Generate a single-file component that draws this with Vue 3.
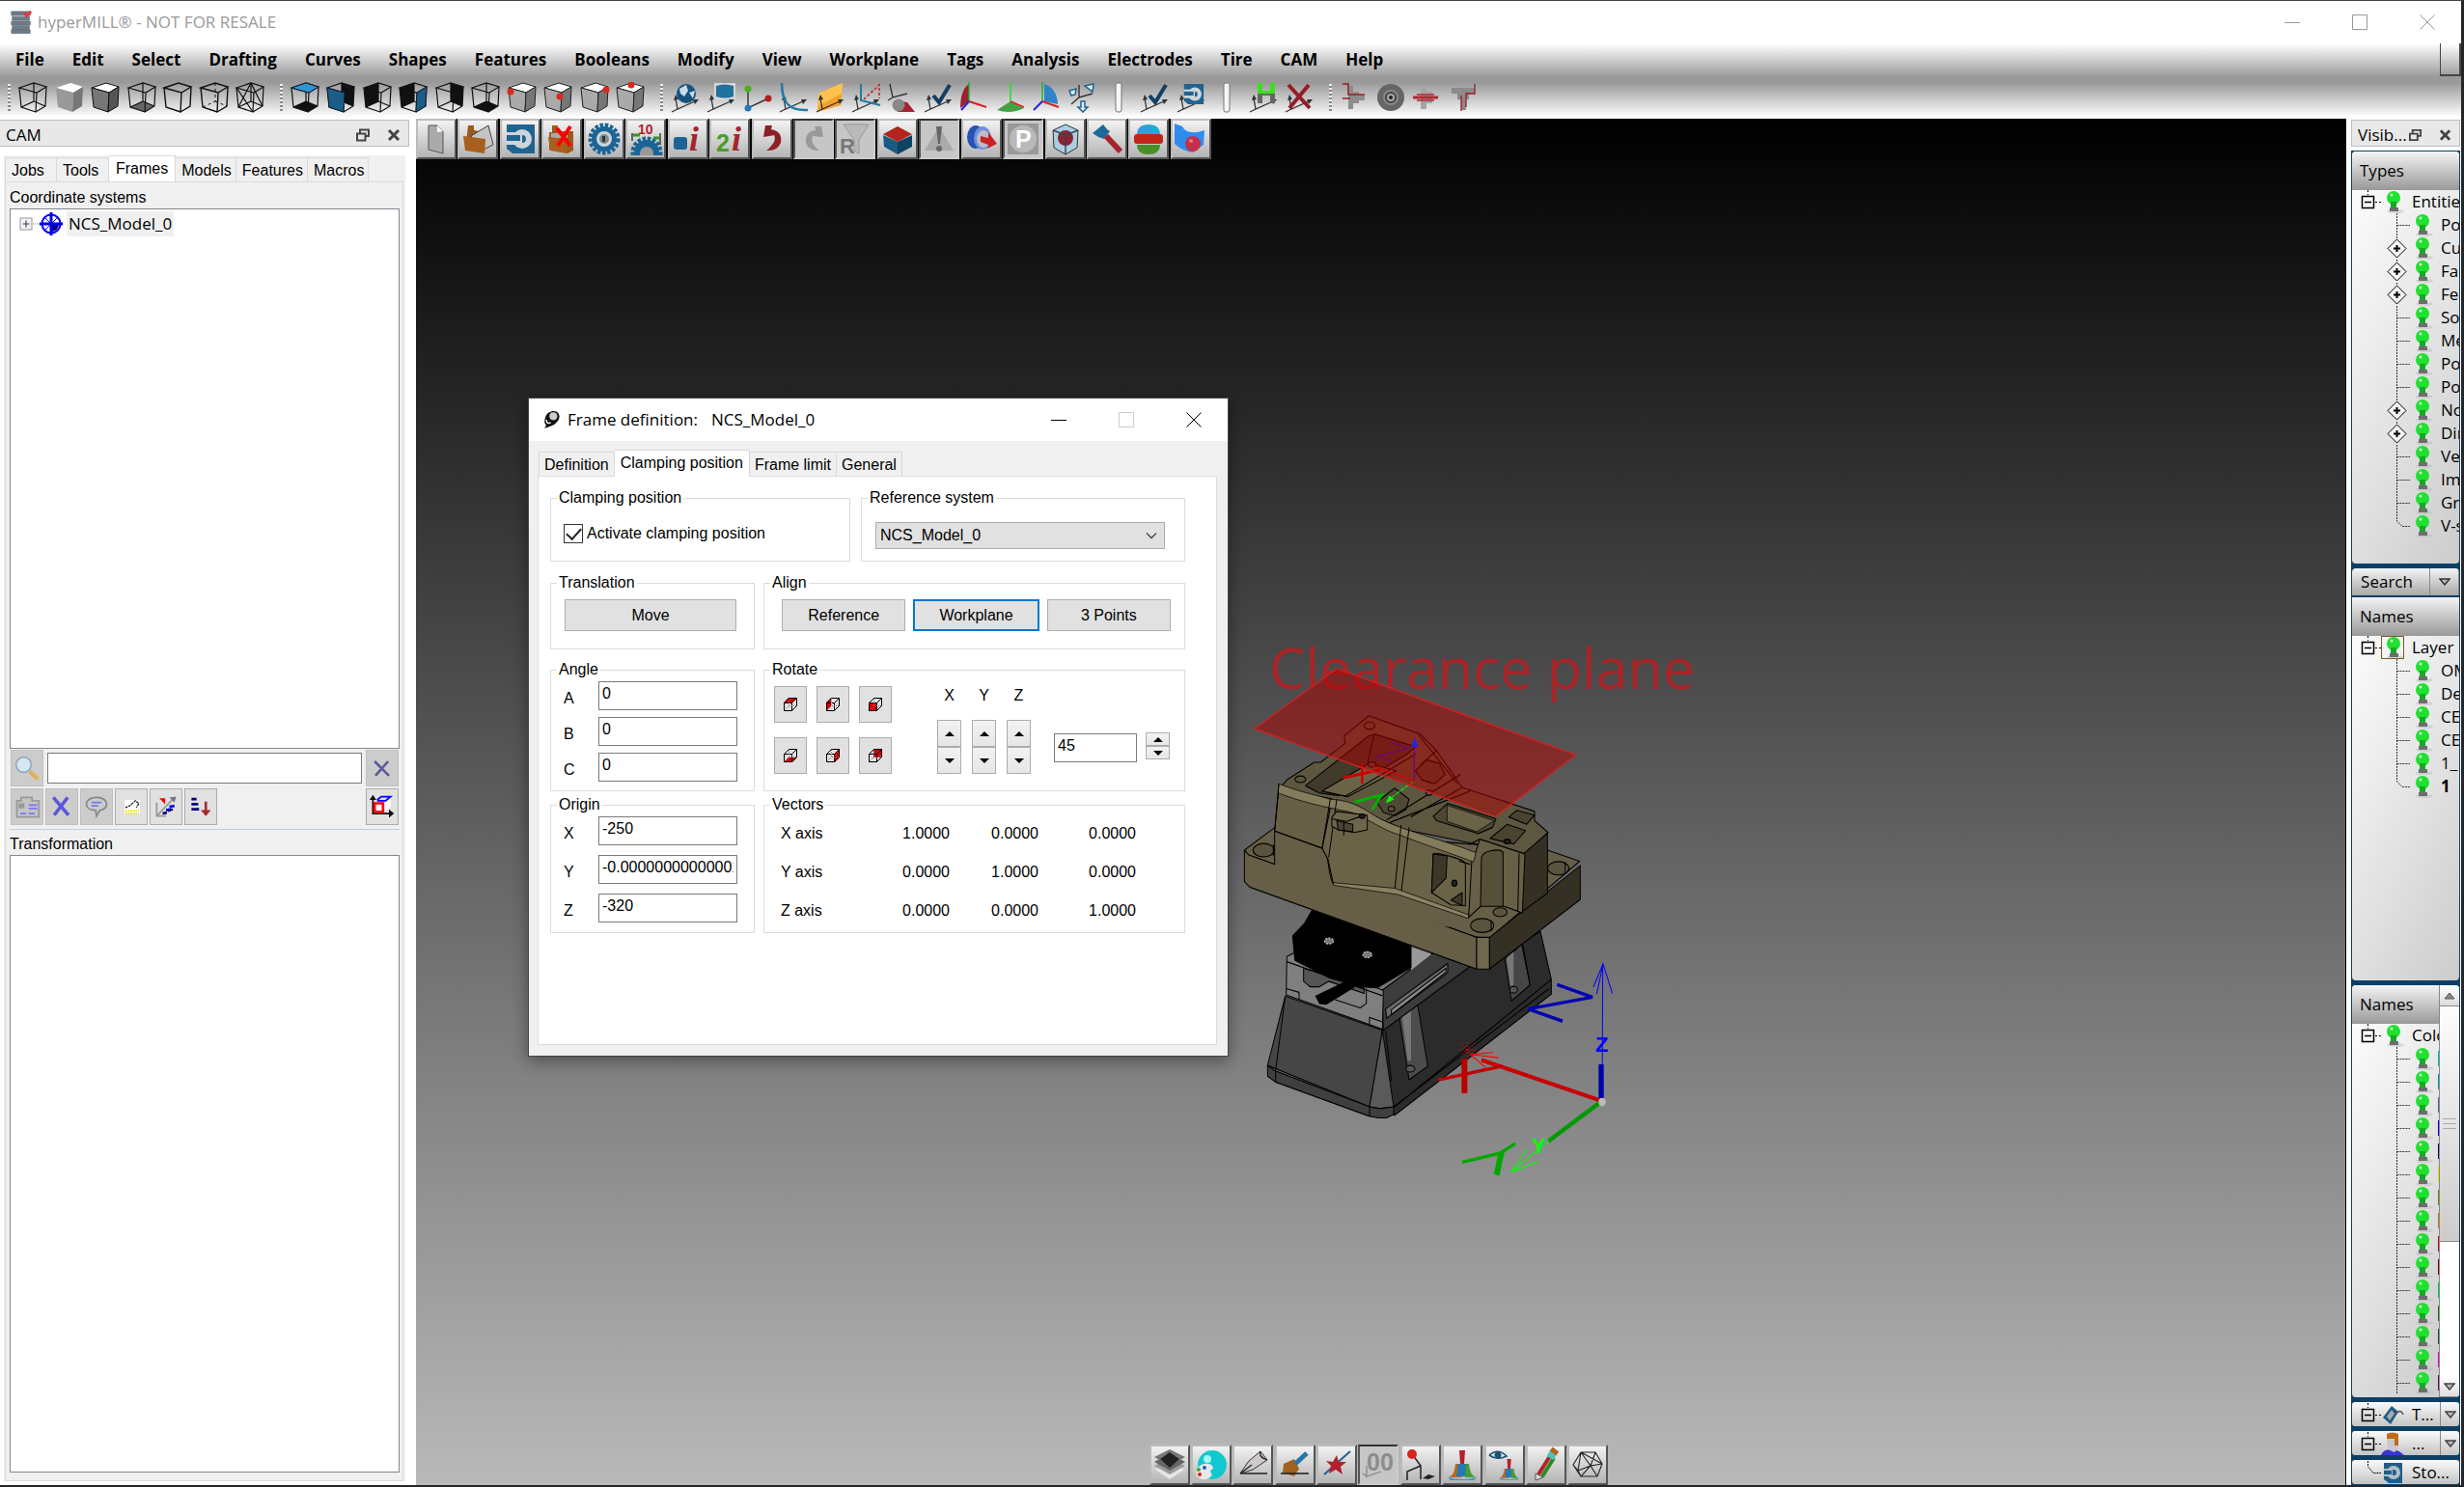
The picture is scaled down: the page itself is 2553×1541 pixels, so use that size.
<template>
  <div class="app">
    <header class="title-bar">
      <svg class="logo" viewBox="0 0 26 26">
        <g fill="#6f7d88" stroke="#4b565f" stroke-width="0.6">
          <rect x="2" y="1" width="21" height="4.5" /><rect x="3" y="7" width="19" height="4" />
          <rect x="2" y="12" width="21" height="4" /><rect x="3" y="17" width="19" height="4" />
          <rect x="2" y="21.5" width="21" height="4" />
        </g>
        <path d="M16 2l3 4 5-5" stroke="#e0393b" stroke-width="3" fill="none" />
      </svg>
      <h1>hyperMILL® - NOT FOR RESALE</h1>
      <div class="window-buttons">
        <button aria-label="Minimize"><svg viewBox="0 0 16 16"><path d="M0 8.5H16" /></svg></button>
        <button aria-label="Maximize"><svg viewBox="0 0 16 16"><path d="M.5 .5H15.5V15.5H.5Z" /></svg></button>
        <button aria-label="Close"><svg viewBox="0 0 16 16"><path d="M.5 .5 15.5 15.5M15.5 .5 .5 15.5" /></svg></button>
      </div>
    </header>

    <div class="ribbon">
      <nav class="menu">
        <button v-for="item in menuItems" :key="item">{{ item }}</button>
        <span class="menu-corner"></span>
      </nav>
      <div class="toolbar">
        <template v-for="(group, g) in toolbarGroups" :key="g">
          <span class="gripper"></span>
          <div class="tool-group" :style="{ width: group.width + 'px' }">
            <button v-for="(name, i) in group.icons" :key="i" :aria-label="name">
              <svg viewBox="0 0 32 32" v-html="icons[name]"></svg>
            </button>
          </div>
        </template>
      </div>
    </div>

    <main class="body">
      <aside class="cam-panel">
        <div class="dock-title">
          <span>CAM</span>
          <button aria-label="Float"><svg viewBox="0 0 14 14"><path d="M4 5V1.5H13V8H9.5M1 5.5H9.5V12.5H1Z" /></svg></button>
          <button aria-label="Close"><svg viewBox="0 0 14 14"><path class="thick" d="M2 2 12 12M12 2 2 12" /></svg></button>
        </div>
        <div class="cam-body">
          <div class="tabs">
            <button v-for="tab in camTabs" :key="tab" :class="{ active: tab === activeCamTab }" @click="activeCamTab = tab">{{ tab }}</button>
          </div>
          <div class="cam-pane">
            <p class="caption">Coordinate systems</p>
            <div class="tree-box">
              <div class="frame-row">
                <svg class="expander" viewBox="0 0 21 14">
                  <rect x="1" y="1" width="12" height="12" fill="#f3f3f3" stroke="#989898" />
                  <path d="M3.5 7H10.5M7 3.5V10.5" stroke="#31457a" stroke-width="1.2" />
                  <path d="M14 7H21" stroke="#888" stroke-dasharray="1 1" />
                </svg>
                <svg class="origin" viewBox="0 0 24 24">
                  <circle cx="12" cy="12" r="9.5" fill="#fff" stroke="#00e" stroke-width="2" />
                  <path d="M5 5 19 19M19 5 5 19" stroke="#00e" />
                  <path d="M12 12H20A8 8 0 0 1 12 20Z" fill="#00007c" />
                  <path d="M0 12H24M12 0V24" stroke="#00e" stroke-width="3" />
                </svg>
                <span class="frame-name">NCS_Model_0</span>
              </div>
            </div>
            <div class="search-row">
              <button class="pad-btn off" aria-label="Search"><svg viewBox="0 0 32 32" v-html="icons.lens"></svg></button>
              <input aria-label="Filter coordinate systems" type="text" />
              <button class="pad-btn off" aria-label="Clear"><svg viewBox="0 0 32 32" v-html="icons.clear"></svg></button>
            </div>
            <div class="action-row">
              <button v-for="a in frameActions" :key="a.icon" class="pad-btn" :class="{ off: a.off }" :aria-label="a.icon">
                <svg viewBox="0 0 32 32" v-html="icons[a.icon]"></svg>
              </button>
            </div>
            <div class="splitter"></div>
            <p class="caption">Transformation</p>
            <div class="transform-box"></div>
          </div>
        </div>
      </aside>

      <section class="viewport">
        <div class="view-bar">
          <button v-for="name in viewIcons" :key="name" :class="{ off: offIcons.includes(name) }" :aria-label="name">
            <svg viewBox="0 0 36 36" v-html="icons[name]"></svg>
          </button>
        </div>

        <span class="clearance">Clearance plane</span>
        <svg class="model" viewBox="0 0 1560 1568" preserveAspectRatio="none">
          <g stroke="#000" stroke-width="3" stroke-linejoin="round">
            <!-- pedestal -->
            <path fill="#2b2b2b" d="M487 1118 740 940 920 880 978 850 1012 980V1020L525 1348 480 1330Z" />
            <path fill="#464646" d="M185 1025 487 1118 447 1325 130 1213Z" />
            <path fill="#5a5a5a" d="M487 1118 522 1325 480 1330 447 1325Z" />
            <path fill="#3f3f3f" d="M130 1213 155 1228 447 1325 480 1330 522 1325V1345L500 1355H475L445 1350 155 1258 130 1242Z" />
            <path fill="none" d="M155 1228V1258M155 1228 185 1025M447 1325V1350M522 1325 1005 1005M525 1325 1012 980" />
            <path fill="#4c4c4c" d="M540 1085 596 1045 628 1215 570 1252Z" />
            <path fill="#777" d="M548 1080 576 1062V1198L566 1202Z" stroke="none" />
            <ellipse cx="574" cy="1222" rx="14" ry="9" fill="#555" />
            <path fill="#464646" d="M868 925 920 885 946 995 888 1038Z" />
            <path fill="#777" d="M872 922 895 905V995L885 998Z" stroke="none" />
            <ellipse cx="895" cy="1008" rx="12" ry="9" fill="#555" />
            <path fill="none" d="M497 1120 515 1255M923 885 946 995" />
            <!-- vise -->
            <path fill="#3c3c3c" d="M485 1010 645 908 760 945 490 1118Z" />
            <path fill="#6a6a6a" d="M497 1060 690 937V962L500 1085Z" />
            <path fill="#8a8a8a" d="M515 1062 685 950V960L515 1075Z" />
            <path fill="#999" stroke="none" d="M576 893 640 912 576 955Z" />
            <path fill="#7f7f7f" d="M190 918 212 908 490 1010 487 1115 188 1022Z" />
            <path fill="#555" d="M242 950 300 965 430 1003V1018L320 985 290 1000 262 1000 242 985Z" />
            <path fill="none" d="M190 932 487 1024M188 1005 228 1015V1035M447 1100V1083L487 1095M340 1035 418 1057 437 1045V1005" />
            <path d="M268 793 576 888V948L470 1003 425 1000 320 975 215 928 208 862 245 828Z" fill="#000" />
            <path d="M375 985 280 1025 292 1045 312 1047 400 1000Z" fill="#000" />
            <g fill="#777" stroke="#ccc" stroke-width="3" stroke-dasharray="6 4"><ellipse cx="321" cy="876" rx="14" ry="8" /><ellipse cx="440" cy="913" rx="14" ry="8" /></g>
            <!-- clamped part -->
            <path fill="#665e46" d="M58 630 150 570 1000 630 1100 660 820 868 775 865 70 643Z" />
            <path fill="#665e46" d="M58 630 72 643 780 866V952L75 730 58 715Z" />
            <path fill="#6f684f" d="M780 866H820V952H780Z" />
            <path fill="#353024" d="M820 866 1102 672V764L820 952Z" />
            <path fill="#665e46" stroke="none" d="M154 560 320 620 330 720 700 838 660 834 154 674Z" />
            <path fill="#675f46" d="M165 465 325 490 325 518 300 625 152 578Z" />
            <path fill="#665e46" stroke="none" d="M154 580 300 626C325 640 315 700 335 722L400 742V752L154 674Z" />
            <path fill="none" d="M152 578 300 625C325 640 315 700 335 722" />
            <path fill="#6b6348" d="M325 515 400 520 560 580 775 655 755 812 535 745 335 722 318 655 300 625Z" />
            <path fill="#5d5740" d="M165 465 190 440 275 392 295 392 372 340 368 320 445 266 605 316 655 360 735 460 960 525V550L1002 582 930 640 560 575 325 490Z" />
            <path fill="#353024" d="M928 638 1000 584V747L915 800Z" />
            <path fill="#675f46" d="M775 640 790 600 930 640 922 800 860 780 795 780 755 812 765 655Z" />
            <path fill="#565039" d="M795 650C800 630 850 625 862 635V782H792Z" />
            <path fill="#857c5c" stroke-width="2" d="M165 450C220 470 280 480 325 492 400 495 430 520 480 545 560 580 690 605 778 637L770 662C690 635 600 610 545 590 480 575 430 535 380 525 310 515 220 495 163 475Z" />
            <path fill="none" d="M165 450 152 578V668M325 492 300 622M345 492 320 650M545 562 525 742M570 568 545 748M912 638 908 795" />
            <path fill="#8a8262" stroke-width="2" d="M335 718 525 733 755 805V815L535 750 335 725Z" />
            <path fill="#3f3a2a" d="M248 455 445 320 465 316 590 350 560 372 350 482 290 475Z" />
            <path fill="#6b6348" d="M300 470 445 395 530 415 380 485Z" />
            <path fill="#6e664b" d="M330 540 345 525 440 535V575L400 582 350 575 330 565Z" />
            <path fill="#4a4431" d="M345 550 395 560V580L350 575Z" />
            <path fill="none" d="M330 545 375 552 415 540M367 552V590" />
            <ellipse cx="424" cy="538" rx="9" ry="6" fill="#222" />
            <path fill="#4f4935" d="M470 500 525 462 570 492 560 520 525 537 490 528Z" />
            <path fill="#4c4632" d="M645 538 690 503 840 545 830 568 785 585 655 550Z" />
            <path fill="#6b6348" d="M688 508V552L780 580 835 550Z" stroke-width="2" />
            <path fill="#494330" d="M880 540 905 522 960 535 935 560ZM822 598 875 560 932 577 895 613Z" />
            <path fill="#6b6348" d="M645 640C650 632 740 655 745 665V780L700 778 640 745Z" />
            <path fill="#3c3728" d="M645 640 688 645 685 705 640 745Z" />
            <path fill="#3c3728" d="M700 765 735 745V780Z" />
            <ellipse cx="711" cy="719" rx="8" ry="8" fill="#222" /><ellipse cx="875" cy="606" rx="10" ry="6" fill="#222" />
            <path fill="none" d="M500 548 730 425M510 555 760 470M370 485 590 370M600 318 720 450M655 360 605 400M575 540 735 460M755 615 790 600M725 660 760 668M460 320 440 398" />
            <g fill="#5a543f">
              <ellipse cx="118" cy="630" rx="33" ry="18" /><ellipse cx="1034" cy="679" rx="33" ry="18" />
              <ellipse cx="797" cy="834" rx="36" ry="19" /><ellipse cx="853" cy="798" rx="22" ry="12" />
              <ellipse cx="232" cy="438" rx="17" ry="9" /><ellipse cx="447" cy="293" rx="17" ry="10" />
              <ellipse cx="455" cy="398" rx="12" ry="7" /><ellipse cx="515" cy="518" rx="10" ry="7" />
              <ellipse cx="635" cy="438" rx="13" ry="9" /><ellipse cx="632" cy="474" rx="10" ry="7" />
            </g>
            <path fill="#4c4632" d="M590 415 625 385 665 395 682 425 650 450 610 440Z" />
            <path fill="none" d="M825 820V850M1055 662V692M148 615V645" />
          </g>
          <!-- local axes -->
          <path d="M586 442 500 497" stroke="#0f0" stroke-width="3" fill="none" stroke-dasharray="14 4" />
          <path d="M400 500 485 480 455 520" stroke="#00b000" stroke-width="8" fill="none" />
          <path d="M498 503 508 482 524 492Z" fill="#0f0" />
          <path d="M365 434 480 412M424 395V450" stroke="#d00000" stroke-width="8" fill="none" />
          <path d="M586 442 460 403" stroke="#f00" stroke-width="4" fill="none" />
          <path d="M586 442V340M512 337 570 355 465 376 520 390" stroke="#2a12d8" stroke-width="4" fill="none" />
          <path d="M345 138 1087 372 838 539 90 301Z" fill="#b00000" fill-opacity="0.5" stroke="#cc2222" stroke-width="4" />
          <path d="M587 324 577 350H598Z" fill="#22f" />
          <!-- world axes -->
          <g fill="none">
            <path d="M1170 1310 1172 935M1143 1000 1173 938 1202 1018M1153 1020 1173 938" stroke="#00f" stroke-width="3" />
            <path d="M1030 994 1140 1028 940 1060 1047 1093" stroke="#0000b4" stroke-width="9" />
            <path d="M1167 1210V1305" stroke="#0000a8" stroke-width="16" />
            <path d="M1165 1308 795 1198" stroke="#c80000" stroke-width="11" />
            <path d="M660 1252 860 1215" stroke="#c00000" stroke-width="9" />
            <path d="M742 1195V1288" stroke="#b80000" stroke-width="18" />
            <path d="M760 1183 848 1192M760 1183 812 1222M760 1183 830 1178M760 1183 790 1205" stroke="#f00" stroke-width="3" />
            <path d="M728 1150 775 1195M730 1190 775 1152M752 1150V1198M728 1170H776" stroke="#f00" stroke-width="3" stroke-dasharray="3 6" />
            <path d="M1165 1312 1003 1418" stroke="#009a00" stroke-width="12" />
            <path d="M1003 1418 885 1502M885 1502 938 1438M885 1502 970 1473M885 1502 925 1490" stroke="#0f0" stroke-width="3" />
            <path d="M735 1475 855 1450 900 1424" stroke="#00a800" stroke-width="9" />
            <path d="M857 1448 842 1510" stroke="#00a800" stroke-width="18" />
          </g>
          <circle cx="1170" cy="1312" r="11" fill="#bbb" />
        </svg>
        <span class="axis axis-z">Z</span>
        <span class="axis axis-y">Y</span>

        <div class="dialog" role="dialog" aria-label="Frame definition">
          <div class="dialog-title">
            <svg class="dialog-icon" viewBox="0 0 20 22">
              <path d="M3 8C5 1 15-1 18 4S16 16 10 18L2 21 4 17C1 15 2 11 3 8Z" fill="#111" />
              <circle cx="12" cy="7" r="4.5" fill="#ccc" /><path d="M4 11C4 15 7 16 9 14" stroke="#fff" stroke-width="1.5" fill="none" />
            </svg>
            <h2>Frame definition:<span>NCS_Model_0</span></h2>
            <div class="dialog-buttons">
              <button aria-label="Minimize"><svg viewBox="0 0 16 16"><path d="M0 8.5H16" stroke="#000" /></svg></button>
              <button aria-label="Maximize" disabled><svg viewBox="0 0 16 16"><path d="M.5 .5H15.5V15.5H.5Z" stroke="#ccc" /></svg></button>
              <button aria-label="Close"><svg viewBox="0 0 16 16"><path d="M.5 .5 15.5 15.5M15.5 .5 .5 15.5" stroke="#000" /></svg></button>
            </div>
          </div>
          <div class="dialog-body">
            <div class="tabs">
              <button v-for="tab in dialogTabs" :key="tab" :class="{ active: tab === activeTab }" @click="activeTab = tab">{{ tab }}</button>
            </div>
            <div class="dialog-pane">
              <div class="row clamp-row">
                <fieldset class="clamp">
                  <legend>Clamping position</legend>
                  <label class="check"><input v-model="activated" type="checkbox" />Activate clamping position</label>
                </fieldset>
                <fieldset class="fill">
                  <legend>Reference system</legend>
                  <div class="select-wrap">
                    <select v-model="reference" aria-label="Reference system"><option>NCS_Model_0</option></select>
                    <svg viewBox="0 0 12 8"><path d="M1 1.5 6 6.5 11 1.5" fill="none" stroke="#444" stroke-width="1.3" /></svg>
                  </div>
                </fieldset>
              </div>
              <div class="row move-row">
                <fieldset class="side"><legend>Translation</legend><button class="push wide">Move</button></fieldset>
                <fieldset class="fill">
                  <legend>Align</legend>
                  <div class="align-buttons">
                    <button class="push">Reference</button>
                    <button class="push focused">Workplane</button>
                    <button class="push">3 Points</button>
                  </div>
                </fieldset>
              </div>
              <div class="row angle-row">
                <fieldset class="side">
                  <legend>Angle</legend>
                  <div class="fields">
                    <label v-for="f in angles" :key="f.axis"><span>{{ f.axis }}</span><input v-model="f.value" type="text" /></label>
                  </div>
                </fieldset>
                <fieldset class="fill">
                  <legend>Rotate</legend>
                  <div class="rotate">
                    <div class="faces">
                      <button v-for="face in faces" :key="face" class="face" aria-label="Rotate to face">
                        <svg viewBox="0 0 16 16">
                          <path :d="face" fill="#d80000" />
                          <path d="M1.5 6.5H9.5V14.5H1.5ZM1.5 6.5 6.5 1.5H14.5L9.5 6.5M14.5 1.5V9.5L9.5 14.5" fill="none" stroke="#000" />
                          <path d="M6.5 2V9.5H14M6 10 2 14" fill="none" stroke="#777" stroke-dasharray="1 1" />
                        </svg>
                      </button>
                    </div>
                    <div class="axes">
                      <div v-for="axis in ['X', 'Y', 'Z']" :key="axis" class="axis-spin">
                        <span>{{ axis }}</span>
                        <button :aria-label="axis + ' up'"><i class="up"></i></button>
                        <button :aria-label="axis + ' down'"><i class="down"></i></button>
                      </div>
                    </div>
                    <input v-model="step" class="step" type="text" aria-label="Rotation step" />
                    <div class="step-spin">
                      <button aria-label="Increase"><i class="up"></i></button>
                      <button aria-label="Decrease"><i class="down"></i></button>
                    </div>
                  </div>
                </fieldset>
              </div>
              <div class="row origin-row">
                <fieldset class="side">
                  <legend>Origin</legend>
                  <div class="fields spaced">
                    <label v-for="f in origin" :key="f.axis"><span>{{ f.axis }}</span><input v-model="f.value" type="text" /></label>
                  </div>
                </fieldset>
                <fieldset class="fill">
                  <legend>Vectors</legend>
                  <table>
                    <colgroup><col class="col-name" /><col class="col-x" /><col class="col-y" /><col /></colgroup>
                    <tbody>
                      <tr v-for="v in vectors" :key="v.name">
                        <th scope="row">{{ v.name }}</th>
                        <td v-for="(n, i) in v.values" :key="i">{{ n }}</td>
                      </tr>
                    </tbody>
                  </table>
                </fieldset>
              </div>
            </div>
          </div>
        </div>

        <div class="bottom-bar">
          <button v-for="name in bottomIcons" :key="name" :class="{ off: name === 'decimals' }" :aria-label="name">
            <svg viewBox="0 0 36 36" v-html="icons[name]"></svg>
          </button>
        </div>
      </section>

      <aside class="dock">
        <div class="dock-title">
          <span>Visib...</span>
          <button aria-label="Float"><svg viewBox="0 0 14 14"><path d="M4 5V1.5H13V8H9.5M1 5.5H9.5V12.5H1Z" /></svg></button>
          <button aria-label="Close"><svg viewBox="0 0 14 14"><path class="thick" d="M2 2 12 12M12 2 2 12" /></svg></button>
        </div>
        <div class="dock-stack">
          <section v-for="panel in panels" :key="panel.root" class="panel">
            <div v-if="panel.search" class="search-head">
              <button>Search</button>
              <button aria-label="Search options"><svg viewBox="0 0 12 8"><path d="M1 1H11L6 7Z" fill="#bbb" stroke="#333" stroke-width="1.5" /></svg></button>
            </div>
            <div class="panel-main">
              <div class="panel-tree">
                <h3>{{ panel.title }}</h3>
                <div class="node">
                  <svg class="guide-root" viewBox="0 0 30 24"><path d="M10.5 6.5H22.5V18.5H10.5ZM13 12.5H20" fill="none" stroke="#000" stroke-width="1.5" /><path d="M16.5 0V5M24 12.5H30" stroke="#000" stroke-dasharray="2 2" /></svg>
                  <svg class="bulb" :class="{ current: panel.search }" viewBox="-1 0 24 24" v-html="icons.bulb"></svg>
                  <span>{{ panel.root }}</span>
                </div>
                <div v-for="(n, i) in panel.nodes" :key="i" class="node">
                  <svg class="guide" viewBox="0 0 60 24" v-html="guide(n, i === panel.nodes.length - 1 && !panel.scroll)"></svg>
                  <svg class="bulb" viewBox="-1 0 24 24" v-html="icons.bulb"></svg>
                  <i v-if="n.color" class="swatch" :style="{ background: n.color }"></i>
                  <span v-else :class="{ bold: n.bold }">{{ n.name }}</span>
                </div>
              </div>
              <div v-if="panel.scroll" class="scrollbar">
                <button aria-label="Scroll up"><svg viewBox="0 0 12 8"><path d="M1 7H11L6 1Z" fill="#888" stroke="#555" /></svg></button>
                <div class="thumb"><i></i><i></i><i></i></div>
                <div class="track"></div>
                <button aria-label="Scroll down"><svg viewBox="0 0 12 8"><path d="M1 1H11L6 7Z" fill="#bbb" stroke="#444" stroke-width="1.5" /></svg></button>
              </div>
            </div>
          </section>
          <section v-for="b in bars" :key="b.label" class="mini">
            <svg class="guide-root" viewBox="0 0 30 24">
              <path v-if="b.more" d="M10.5 6.5H22.5V18.5H10.5ZM13 12.5H20" fill="none" stroke="#000" stroke-width="1.5" />
              <path v-if="b.more" d="M16.5 0V5M24 12.5H30" stroke="#000" stroke-dasharray="2 2" />
              <path v-else d="M16.5 0V6L22 12.5H30" fill="none" stroke="#000" stroke-dasharray="2 1" />
            </svg>
            <svg class="mini-icon" viewBox="0 0 24 24" v-html="icons[b.icon]"></svg>
            <span>{{ b.label }}</span>
            <button v-if="b.more" aria-label="More"><svg viewBox="0 0 12 8"><path d="M1 1H11L6 7Z" fill="#bbb" stroke="#444" stroke-width="1.5" /></svg></button>
          </section>
        </div>
      </aside>
    </main>
  </div>
</template>

<script setup>
import { ref, reactive } from 'vue'

const menuItems = ['File', 'Edit', 'Select', 'Drafting', 'Curves', 'Shapes', 'Features', 'Booleans', 'Modify', 'View',
  'Workplane', 'Tags', 'Analysis', 'Electrodes', 'Tire', 'CAM', 'Help']

const toolbarGroups = [
  { width: 257, icons: ['wire', 'solid', 'solidEdges', 'glass', 'hidden', 'dashed', 'facets'] },
  { width: 369, icons: ['top', 'front', 'left', 'right', 'back', 'bottom', 'isoLeft', 'isoFront', 'isoRight', 'isoBack'] },
  { width: 668, icons: ['wpWorld', 'wpScreen', 'wpPoints', 'wpCurve', 'wpFace', 'wpPlane', 'wpCone', 'wpCheck', 'axX', 'axY',
    'axZ', 'wpArrows', 'bar', 'wpCheck', 'wpSave', 'bar', 'wpH', 'wpDelete'] },
  { width: 145, icons: ['tireA', 'tireB', 'tireC', 'tireD'] }
]

const viewIcons = ['file', 'open', 'disk', 'closeFile', 'gear', 'gearTen', 'info', 'infoTwo', 'undo', 'redo', 'filter', 'box',
  'warn', 'extrude', 'park', 'boundBox', 'hammer', 'zones', 'sheet']
const offIcons = ['redo', 'filter', 'warn', 'park']
const bottomIcons = ['layers', 'palette', 'pen', 'brush', 'star', 'decimals', 'probe', 'bell', 'bellEye', 'pencil', 'mesh']

const camTabs = ['Jobs', 'Tools', 'Frames', 'Models', 'Features', 'Macros']
const activeCamTab = ref('Frames')
const frameActions = [
  { icon: 'card', off: true }, { icon: 'remove', off: true }, { icon: 'note', off: true },
  { icon: 'edit' }, { icon: 'axes' }, { icon: 'sort' }, { icon: 'frame' }
]

const dialogTabs = ['Definition', 'Clamping position', 'Frame limit', 'General']
const activeTab = ref('Clamping position')
const activated = ref(true)
const reference = ref('NCS_Model_0')
const step = ref('45')
const angles = reactive([{ axis: 'A', value: '0' }, { axis: 'B', value: '0' }, { axis: 'C', value: '0' }])
const origin = reactive([{ axis: 'X', value: '-250' }, { axis: 'Y', value: '-0.00000000000001' }, { axis: 'Z', value: '-320' }])
const vectors = [
  { name: 'X axis', values: ['1.0000', '0.0000', '0.0000'] },
  { name: 'Y axis', values: ['0.0000', '1.0000', '0.0000'] },
  { name: 'Z axis', values: ['0.0000', '0.0000', '1.0000'] }
]

// highlighted side of the little cube on each rotate button
const faces = ['M1 6 6 1H15L10 6Z', 'M1 6 6 1V10L1 15Z', 'M1 6H10V15H1Z', 'M1 15 6 10H15L10 15Z', 'M10 6 15 1V10L10 15Z', 'M6 1H15V10H6Z']

const colors = ['#00b8c8', '#009c9c', '#4a6a8c', '#0000c8', '#000070', '#e8e000', '#807c10', '#c87820', '#d80000', '#780000',
  '#00d030', '#007c20', '#005a38', '#d800d8', '#70007c']

const panels = [
  {
    title: 'Types', root: 'Entities',
    nodes: [{ name: 'Points' }, { name: 'Curves', plus: true }, { name: 'Faces', plus: true }, { name: 'Features', plus: true },
      { name: 'Solids' }, { name: 'Meshes' }, { name: 'Polygons' }, { name: 'Point clouds' }, { name: 'Notes', plus: true },
      { name: 'Dimensions', plus: true }, { name: 'Vectors' }, { name: 'Images' }, { name: 'Groups' }, { name: 'V-sketches' }]
  },
  {
    title: 'Names', root: 'Layer', search: true,
    nodes: [{ name: 'OM' }, { name: 'Default' }, { name: 'CE' }, { name: 'CE' }, { name: '1_1' }, { name: '1', bold: true }]
  },
  { title: 'Names', root: 'Colors', scroll: true, nodes: colors.map(color => ({ color })) }
]

const bars = [
  { label: 'T...', icon: 'tag', more: true },
  { label: '...', icon: 'user', more: true },
  { label: 'Sto...', icon: 'store', more: false }
]

const guide = (node, last) => {
  if (node.plus) {
    return '<path d="M46.5 0V24" stroke="#333" stroke-dasharray="2 2"/><path d="M46.5 3 56 12.5 46.5 22 37 12.5Z" fill="#f4f4f4" stroke="#000"/><path d="M43 12.5H50M46.5 9V16" stroke="#000" stroke-width="2"/>'
  }
  const d = last ? 'M46.5 0V7L52 12.5H60' : 'M46.5 0V24M46.5 12.5H60'
  return `<path d="${d}" fill="none" stroke="#333" stroke-dasharray="2 1"/>`
}

const shape = (d, fill, stroke = 'none', w = 1) => `<path d="${d}" fill="${fill}" stroke="${stroke}" stroke-width="${w}"/>`
const line = (d, stroke, w = 1.4) => shape(d, 'none', stroke, w)
const ball = (x, y, r, fill) => `<circle cx="${x}" cy="${y}" r="${r}" fill="${fill}"/>`

const outer = 'M2 6 17 1 30 5 20 11ZM2 6 4 26 19 31 20 11M19 31 29 25 30 5'
const inner = 'M17 1V20L4 26M17 20 29 25'
const wire = line(outer + inner, '#111', 1.2)
const solid = (topFill, leftFill, rightFill, edge = 'none') =>
  shape('M2 6 17 1 30 5 20 11Z', topFill, edge) + shape('M2 6 20 11 19 31 4 26Z', leftFill, edge) + shape('M20 11 30 5 29 25 19 31Z', rightFill, edge)
const iso = (x, y) => solid('#fff', '#aaa', '#777', '#222') + ball(x, y, 3.5, '#d82a1c')
const smallAxes = line('M6 17 8 28 26 20M8 28 2 31', '#333', 1.3) + shape('M4 19 6 13 9 18ZM24 18 30 18 26 23Z', '#333')
const check = line('M11 14 17 21 28 3', '#123f63', 4)
const disk = () => shape('M4 3H33V33H10L4 28Z', '#1f6390') + ball(20, 18, 10, '#cdd5da') + ball(20, 18, 4, '#1f6390') + shape('M4 11H20V24H4Z', '#cdd5da') + shape('M4 14H18V20H4Z', '#1f6390')
const bell = shape('M15 3H21L20 17H16Z', '#b3212c') + shape('M11 17H18V31H4Q10 29 11 17Z', '#b86820') + shape('M14 17H22V30H12Z', '#2379b5') + shape('M22 17H25Q26 29 32 31H21Z', '#499b31') + shape('M3 31Q18 35 33 31L30 34H6Z', '#23a0cf')
const teeth = (x, y, r, c) => `<circle cx="${x}" cy="${y}" r="${r}" fill="none" stroke="${c}" stroke-width="5" stroke-dasharray="3.4 1.7"/><circle cx="${x}" cy="${y}" r="${r - 1}" fill="${c}"/>`
const clipped = content => `<svg width="36" height="35" overflow="hidden">${content}</svg>`
const letter = (x, y, size, fill, t, extra = '') => `<text x="${x}" y="${y}" font-size="${size}" fill="${fill}" ${extra}>${t}</text>`
const serif = 'font-family="Liberation Serif" font-style="italic" font-weight="bold"'
const sans = 'font-family="Liberation Sans" font-weight="bold"'

const icons = {
  wire,
  solid: solid('#fff', '#999', '#777'),
  solidEdges: solid('#fff', '#777', '#555', '#111'),
  glass: shape('M4 26 17 20 29 25 19 31Z', '#666') + wire,
  hidden: line(outer, '#111'),
  dashed: line(outer, '#111') + `<path d="${inner}" fill="none" stroke="#111" stroke-dasharray="3 3"/>`,
  facets: wire + line('M2 6 19 31M17 1 4 26M17 1 29 25', '#111', 1.2),
  top: shape('M4 26 17 20 29 25 19 31Z', '#111') + wire + shape('M2 6 17 1 30 5 20 11Z', '#2f94d4', '#123'),
  front: shape('M17 1 30 5 29 25 17 20Z', '#111') + wire + shape('M2 6 20 11 19 31 4 26Z', '#1d5c86', '#123'),
  left: shape('M2 6 17 1V20L4 26Z', '#111') + wire,
  right: shape('M2 6 17 1V20L4 26Z', '#111') + wire + shape('M20 11 30 5 29 25 19 31Z', '#1d5c86', '#123'),
  back: shape('M17 1 30 5 29 25 17 20Z', '#111') + wire,
  bottom: shape('M4 26 17 20 29 25 19 31Z', '#111') + wire,
  isoLeft: iso(4, 10),
  isoFront: iso(18, 15),
  isoRight: iso(28, 8),
  isoBack: iso(17, 3),
  wpWorld: smallAxes + ball(17, 12, 10, '#17527f') + shape('M10 7 17 3 19 9 15 15 11 12ZM20 11 26 9 24 17Z', '#c9dde9'),
  wpScreen: shape('M9 1H31V19H9Z', '#d6d6d6') + shape('M11 4Q20 1 29 4V15Q20 18 11 15Z', '#22729f') + smallAxes,
  wpPoints: line('M6 6V27L27 17', '#333') + ball(6, 7, 3.5, '#4caf1f') + ball(27, 17, 3.5, '#b31f1f') + ball(6, 27, 3.5, '#2379b5'),
  wpCurve: smallAxes + line('M4 1C4 22 12 30 31 29', '#2379a5', 2.5),
  wpFace: shape('M3 31 4 12 29 1 27 24Z', '#f5a32c') + shape('M4 12 29 1 28 12 3 25Z', '#ffc24d') + smallAxes,
  wpPlane: smallAxes + line('M11 2V19L31 24', '#2379a5', 2) + '<path d="M14 18 30 3V17" fill="none" stroke="#b22" stroke-width="1.5" stroke-dasharray="3 2"/>',
  wpCone: line('M4 2 7 16 22 12M7 16 2 19', '#333') + shape('M10 19 22 21 30 31H12Z', '#a52330') + ball(13, 24, 6.5, '#888'),
  wpCheck: smallAxes + check,
  axX: shape('M11 2V20L2 27Q2 8 11 2Z', '#9b2230') + line('M11 0V20', '#19b51f') + line('M11 20 29 26', '#d22', 2) + line('M11 20 3 29', '#22d', 2),
  axY: shape('M16 20 2 29Q16 34 30 27Z', '#45a045') + line('M16 0V20', '#19e51f', 1.5) + line('M16 20 30 26', '#d22', 1.5),
  axZ: shape('M14 2V20L28 23Q27 6 14 2Z', '#2f83c9') + line('M12 0V20', '#19b51f') + line('M12 20 29 26', '#d22', 2) + line('M12 20 3 29', '#22d', 2),
  wpArrows: line('M13 16V3M13 16 27 12M13 16 5 23', '#333') + shape('M3 9 10 7 9 13 5 14ZM19 4 28 2 27 10ZM15 20H19V26H22L17 31 12 26H15Z', '#dcecf5', '#1f6390', 1.5),
  bar: '<rect x="13" y="1" width="6" height="30" rx="2" fill="#f6f6f6" stroke="#777"/>',
  wpSave: smallAxes + '<g transform="translate(6 0) scale(.7)">' + disk() + '</g>',
  wpH: smallAxes + shape('M10 1H15V9H23V1H28V22H23V14H15V22H10Z', '#666') + shape('M10 1H15V9H23V1H28V12H10Z', '#3be01c'),
  wpDelete: smallAxes + line('M5 3 27 27M26 3 6 27', '#951c24', 4),
  tireA: shape('M10 4H15V28H10ZM15 10H21V22H15ZM21 13H27V19H21Z', '#8d8d8d') + line('M4 2H10V13H27M4 17H12', '#9b1c24', 1.5),
  tireB: ball(16, 16, 14, '#666') + ball(16, 16, 8, '#888') + ball(16, 16, 6, '#444') + ball(16, 16, 4, '#aaa') + ball(16, 16, 2, '#222'),
  tireC: shape('M10 4H16V28H10ZM16 10H22V22H16Z', '#a4a4a4') + line('M2 16H28', '#b32630', 3) + line('M6 13H24M6 19H24', '#b32630'),
  tireD: shape('M4 6H28V12H4ZM10 12H22V18H10ZM14 18H19V29H14Z', '#8b8b8b') + line('M28 2V12H19V26M14 14V30', '#9b1c24', 1.3),
  file: shape('M10 4H19L25 10V33L10 29Z', '#aaa', '#555') + shape('M19 4V11L25 10Z', '#fff'),
  open: shape('M8 4H14V9L20 10V22H6Z', '#9a5a1c') + shape('M11 15 29 4 34 24 22 30Z', '#c4c4c4', '#444') + shape('M3 15 26 18 25 33 5 30Z', '#a85f1c'),
  disk: disk(),
  closeFile: shape('M8 4H14V10H30V30L24 33 5 29V11H8Z', '#9a5a1c') + shape('M7 12H24V17H7Z', '#aaa') + shape('M4 16 24 18 23 33 6 30Z', '#a85f1c') + line('M13 7 27 25M27 5 14 25', '#f00', 4),
  gear: teeth(18, 18, 14, '#1c6496') + ball(18, 18, 8, '#cdd5da') + ball(18, 18, 5, '#7c8a92') + shape('M16 15H19V21H16Z', '#333'),
  gearTen: clipped(teeth(19, 32, 14, '#1c6496') + ball(19, 33, 7, '#999')) + letter(10, 13, 14, '#b3212c', '10', sans) + line('M4 12V20M33 12V24', '#333') + line('M5 14H12M26 17H32', '#2c9a22', 3),
  info: '<rect x="3" y="16" width="14" height="13" rx="3" fill="#1c6496"/>' + letter(19, 30, 36, '#a5252e', 'i', serif),
  infoTwo: letter(4, 31, 25, '#4c9a2a', '2', sans) + letter(20, 30, 36, '#a5252e', 'i', serif),
  undo: shape('M11 4 9 16 21 14 18 11Q24 17 18 24 15 28 12 30 23 31 27 22 29 10 17 8L18 4Z', '#8e1f27'),
  redo: shape('M26 5 28 16 17 15 19 12Q14 17 18 24 21 28 24 30 13 31 10 22 9 10 20 9L19 5Z', '#999'),
  filter: shape('M6 3H32L22 19V33L17 30V19Z', '#b9b9b9', '#999') + letter(2, 33, 22, '#777', 'R', sans),
  box: shape('M3 14 18 21V34L4 26Z', '#175a82') + shape('M18 21 33 14V26L18 34Z', '#0f4263') + shape('M3 13 18 5 33 13 18 21Z', '#b3241c'),
  warn: shape('M18 5 33 30H3Z', '#aaa') + shape('M15 5H21L19 23H17Z', '#666') + ball(18, 28, 3, '#666'),
  extrude: '<ellipse cx="12" cy="16" rx="9" ry="12" fill="#2a52b5"/><ellipse cx="19" cy="17" rx="9" ry="12" fill="#6f8fdb"/><ellipse cx="20" cy="18" rx="7" ry="9" fill="#b9bcc8"/>' + shape('M17 15 25 17V11L34 23 24 28 25 24 17 21Z', '#cc2024'),
  park: '<rect x="2" y="2" width="32" height="32" fill="#999"/>' + ball(18, 18, 14, '#b9b9b9') + letter(10, 27, 25, '#fff', 'P', sans),
  boundBox: shape('M5 9 18 3 31 9 30 27 18 34 6 27Z', '#a9d0e4', '#333') + ball(18, 17, 8, '#8d2430') + line('M5 9 18 14 31 9M18 14V34', '#345'),
  hammer: shape('M3 12 14 3 18 8 21 10 15 18 9 16Z', '#1c6a99') + line('M17 15 32 31', '#a5252e', 6),
  zones: shape('M6 14Q6 3 18 3T30 14Z', '#2aa5cf') + shape('M6 24Q6 34 18 34T30 24Z', '#4a8f26') + '<rect x="3" y="13" width="30" height="10" rx="3" fill="#c32418"/>',
  sheet: shape('M1 2 9 5Q14 15 32 9L31 24 20 32Q8 30 1 23Z', '#2d8cf0') + ball(20, 23, 8, '#c4304a') + ball(18, 20, 2, '#e77'),
  layers: shape('M18 14 33 23 18 33 3 23Z', '#e6e6e6') + shape('M18 11 34 19 18 28 2 19Z', '#9a9a9a') + shape('M18 6 34 15 18 24 2 15Z', '#666') + shape('M18 2 34 10 18 19 2 10Z', '#777') + shape('M18 5 28 12 18 21 8 12Z', '#222'),
  palette: ball(19, 18, 15, '#0fc9cf') + ball(14, 12, 4, '#a5f5f5') + shape('M3 30Q1 20 10 17 20 16 20 22 15 24 19 28 16 34 8 33Z', '#e8e8e8') + ball(6, 28, 2, '#c22') + ball(11, 21, 2, '#25c') + ball(5, 23, 2, '#3a3'),
  pen: shape('M5 27 14 14 26 4 33 13 18 23Z', '#cfc9cc', '#333') + line('M26 4Q24 10 33 13M5 27 17 18M5 27H33', '#222', 1.3),
  brush: shape('M6 17 17 12 22 22 17 30 5 26Z', '#a2611f') + line('M18 17 30 6', '#2377ab', 5) + line('M3 27H32', '#222', 1.6),
  star: line('M5 28 32 4', '#235f99', 2) + shape('M18 8 20 15 28 15 22 20 24 28 17 23 10 27 12 19 7 14 14 15Z', '#b3212c'),
  decimals: letter(6, 24, 25, '#8c8c8c', '00', sans) + line('M6 19V30L21 25M6 30 2 27', '#888', 1.3),
  probe: line('M10 8 18 19V33M18 19 4 25V34', '#222', 1.5) + ball(9, 7, 5, '#d8241c') + shape('M20 32 26 28 33 30 26 33Z', '#222'),
  bell,
  bellEye: '<g transform="translate(10 10) scale(.7)">' + bell + '</g>' + line('M2 8Q11 0 20 9 10 14 2 8', '#1d5275', 1.6) + ball(11, 8, 3.5, '#1d5275'),
  pencil: line('M10 28 22 9', '#b3212c', 4) + line('M14 30 26 11', '#2c8a22', 4) + line('M22 11 26 4', '#4fc3b5', 8) + line('M25 6 28 2', '#b3651c', 8) + shape('M7 27 15 31 7 34Z', '#ddd', '#555'),
  mesh: line('M11 5H26L33 17 28 30H11L3 18ZM11 5 8 24 3 18M11 5 21 19 8 24 11 30 21 19 28 30M26 5 21 19 33 17M11 5 33 17', '#222', 1.1),
  lens: line('M19 20 29 29', '#e0b060', 5) + '<circle cx="12" cy="12" r="9" fill="#d3e8f2" stroke="#9ab" stroke-width="2"/>',
  clear: line('M7 8 24 25M23 8 8 25', '#5a5a9c', 3),
  card: shape('M4 9H9V5H22V9H30V28H4Z', '#c4c4c4', '#999', 2) + shape('M6 12H13V18H6Z', '#999') + line('M18 14H28M18 18H28M8 24H15M18 24H25', '#77e', 2),
  remove: line('M6 5 24 26M23 5 7 26', '#5a58d8', 4),
  note: shape('M16 5C24 5 28 9 28 13S24 20 20 20L16 27 15 20C8 20 4 17 4 13S8 5 16 5Z', '#ccc', '#888', 2) + line('M10 11H22M10 15H18', '#77e', 2),
  edit: shape('M8 8H26V25H8Z', '#fff') + '<path d="M9 21H25M9 24H25" stroke="#e8e000" stroke-width="2" stroke-dasharray="2 1"/><path d="M9 17 14 15 21 9 25 12 22 17" fill="none" stroke="#222" stroke-width="1.5" stroke-dasharray="3 1"/>',
  axes: line('M5 11V27H16M5 27 26 5', '#999', 2) + shape('M8 6H15V13Z', '#f00') + line('M20 16 26 15M16 20 22 19', '#00f', 3) + line('M12 24 17 23M18 21 24 19', '#000078', 3) + shape('M20 5 28 4 26 11Z', '#777'),
  sort: line('M5 7H11M5 13H13M5 19H14', '#000080', 3) + line('M22 10V25', '#a52a2a', 3) + shape('M16 20H28L22 27Z', '#a52a2a'),
  frame: line('M5 6V24H26', '#111', 2) + shape('M1 8 5 2 9 8ZM24 19 30 24 24 29Z', '#111') + shape('M7 12H17V22H7Z', '#fff', '#f00', 3) + shape('M19 12 26 5V16L19 22Z', '#fff') + line('M10 8 15 4H26L20 9H10', '#00f', 2),
  bulb: '<ellipse cx="14" cy="22" rx="9" ry="2" fill="#bbb" opacity=".5"/>' + shape('M9 15H15V18H17V22H8V18H9Z', '#6d6d6d') + ball(12, 8, 7, '#20e030') + shape('M9 12H15V18H9Z', '#18a828') + ball(10, 5, 1.5, '#cfffcf'),
  tag: shape('M2 15 11 3 18 9 10 22Z', '#1f5d85') + shape('M6 14 11 7 14 11 9 18Z', '#aaa') + line('M15 12Q20 5 23 12', '#555', 1.5),
  user: shape('M0 24Q2 18 10 18T24 24Z', '#3a33d8') + shape('M6 5H18V17L14 21 7 18Z', '#c9c9c9') + shape('M6 7V2Q12-1 18 2V14H14V7Z', '#c06a1c'),
  store: shape('M3 2H22V23H8L3 19Z', '#1f5d85') + ball(13, 12, 7, '#aebfca') + ball(13, 12, 3, '#1f5d85') + shape('M3 8H12V16H3Z', '#aebfca') + shape('M3 10H11V14H3Z', '#1f5d85')
}
</script>

<style>
html,
body {
  background: #fff;
}
</style>

<style scoped>
* {
  box-sizing: border-box;
}

button,
input,
select {
  font: inherit;
  color: inherit;
  margin: 0;
  padding: 0;
  border: 0;
  border-radius: 0;
  background: none;
}

svg {
  display: block;
}

.app {
  display: flex;
  flex-direction: column;
  height: 100vh;
  border-top: 1px solid #444;
  border-right: 3px solid #26262a;
  border-bottom: 2px solid #26262a;
  background: #fff;
  color: #000;
  font: 16px/20px "Liberation Sans", Arial, sans-serif;
  overflow: hidden;
}

/* Title bar */
.title-bar {
  display: flex;
  align-items: center;
  height: 44px;
  padding-left: 10px;
}

.logo {
  width: 24px;
  height: 24px;
}

h1 {
  flex: 1;
  margin: 0 0 0 5px;
  color: #999;
  font: 400 17px/24px "Open Sans", sans-serif;
}

.window-buttons,
.dialog-buttons {
  display: flex;
}

.window-buttons button,
.dialog-buttons button {
  display: flex;
  align-items: center;
  justify-content: center;
  width: 70px;
  height: 40px;
}

.window-buttons svg,
.dialog-buttons svg {
  width: 16px;
  height: 16px;
  fill: none;
}

.window-buttons svg {
  stroke: #999;
}

/* Menu and toolbar */
.ribbon {
  background: linear-gradient(#fff, #999 45%, #999 52%, #fff 98%);
}

.menu {
  display: flex;
  height: 34px;
  padding-left: 1px;
}

.menu button {
  padding: 0 14px 0 15px;
  font: 700 17px/34px "Open Sans", sans-serif;
}

.menu-corner {
  width: 22px;
  margin-left: auto;
  border: 2px solid #444;
  border-width: 0 2px 2px 1px;
}

.toolbar {
  display: flex;
  align-items: center;
  height: 44px;
  padding-left: 8px;
}

.gripper {
  width: 3px;
  height: 28px;
  margin-right: 7px;
  background: repeating-linear-gradient(#eee 0 2px, #888 2px 4px);
}

.tool-group {
  display: flex;
  justify-content: space-between;
  margin-right: 15px;
}

.toolbar svg {
  width: 32px;
  height: 32px;
}

/* Work area */
.body {
  display: flex;
  flex: 1;
  min-height: 0;
}

.cam-panel {
  display: flex;
  flex-direction: column;
  width: 424px;
  margin-right: 7px;
  padding: 1px 0 4px;
}

.dock-title {
  display: flex;
  align-items: center;
  height: 28px;
  padding: 3px 8px 0 6px;
  border: 1px solid #bfbfbf;
  background: #e8e8e8;
  font: 17px/24px "Open Sans", sans-serif;
}

.cam-panel .dock-title {
  border-left: 0;
}

.dock-title span {
  flex: 1;
}

.dock-title button + button {
  margin-left: 18px;
}

.dock-title svg {
  width: 14px;
  height: 14px;
  fill: none;
  stroke: #444;
  stroke-width: 2;
}

.thick {
  stroke-width: 3;
}

.cam-body {
  display: flex;
  flex-direction: column;
  flex: 1;
  margin: 9px 4px 0;
  padding: 0 2px 0 1px;
  background: #f0f0f0;
}

.tabs {
  display: flex;
  align-items: flex-end;
  height: 27px;
}

.tabs button {
  height: 25px;
  padding: 1px 5px 0;
  border: 1px solid #d9d9d9;
  border-width: 1px 1px 0 0;
  background: #f0f0f0;
}

.tabs button:first-child {
  border-left-width: 1px;
}

.tabs .active {
  height: 28px;
  margin-bottom: -1px;
  padding: 0 6px 2px;
  background: #fff;
}

.cam-body .tabs button {
  min-width: 54px;
  padding-left: 6px;
  padding-right: 4px;
  text-align: left;
}

.cam-body .tabs .active {
  padding-left: 7px;
  padding-right: 7px;
}

.cam-pane {
  display: flex;
  flex-direction: column;
  flex: 1;
  padding: 5px 3px 8px 4px;
  border: 1px solid #dcdcdc;
}

.caption {
  margin: 0;
  line-height: 22px;
}

.tree-box,
.transform-box {
  border: 1px solid #828790;
  background: #fff;
}

.tree-box {
  flex: 560;
}

.transform-box {
  flex: 641;
}

.frame-row {
  display: flex;
  align-items: center;
  height: 30px;
  padding-left: 9px;
}

.expander {
  width: 21px;
  height: 14px;
}

.origin {
  width: 24px;
  height: 24px;
}

.frame-name {
  margin-left: 4px;
  padding: 0 2px;
  background: #f0f0f0;
  font: 17px/26px "Open Sans", sans-serif;
}

.search-row,
.action-row {
  display: flex;
  align-items: center;
  gap: 2px;
  margin: 2px 1px 0;
}

.search-row {
  margin-top: 1px;
}

.search-row input {
  flex: 1;
  height: 32px;
  margin: 0 2px;
  border: 1px solid #7a7a7a;
  background: #fff;
}

.pad-btn {
  display: flex;
  align-items: center;
  justify-content: center;
  width: 34px;
  height: 38px;
  border: 1px solid #adadad;
  background: #e1e1e1;
}

.pad-btn.off {
  border-color: #bfbfbf;
  background: #ccc;
}

.pad-btn svg {
  width: 28px;
  height: 28px;
}

.action-row .pad-btn:last-child {
  margin-left: auto;
}

.splitter {
  height: 1px;
  margin: 4px 0;
  background: #b8cfe5;
}

/* Viewport */
.viewport {
  position: relative;
  display: flex;
  flex-direction: column;
  justify-content: space-between;
  flex: 1;
  border-right: 1px solid #000;
  background: linear-gradient(#000, #b9b9b9);
}

.view-bar,
.bottom-bar {
  display: flex;
  justify-content: space-between;
  width: 824px;
}

.bottom-bar {
  align-self: center;
  width: 476px;
  margin-right: 4px;
}

.view-bar button,
.bottom-bar button {
  display: flex;
  align-items: center;
  justify-content: center;
  width: 42px;
  height: 42px;
  border: 2px solid #bbb;
  border-color: #bbb #555 #555 #bbb;
  background: linear-gradient(#f2f2f2, #b4b4b4);
}

.view-bar .off,
.bottom-bar .off {
  border-color: #333 #ccc #ccc #555;
  background: #c6c6c6;
}

.view-bar svg,
.bottom-bar svg {
  width: 36px;
  height: 36px;
  overflow: visible;
}

.clearance {
  position: absolute;
  left: 884px;
  top: 528px;
  color: #a82428;
  font: 59px/80px "Open Sans", sans-serif;
  white-space: nowrap;
}

.model {
  position: absolute;
  left: 839px;
  top: 517px;
  width: 520px;
  height: 600px;
}

.axis {
  position: absolute;
  font: 700 22px/22px "Liberation Sans", sans-serif;
}

.axis-z {
  left: 1222px;
  top: 949px;
  color: #00f;
}

.axis-y {
  left: 1156px;
  top: 1054px;
  color: #0f0;
}

/* Frame definition dialog */
.dialog {
  position: absolute;
  left: 116px;
  top: 289px;
  width: 726px;
  border: 1px solid #444;
  background: #f0f0f0;
  box-shadow: 0 4px 16px rgba(0, 0, 0, 0.4);
}

.dialog-title {
  display: flex;
  align-items: center;
  height: 44px;
  padding-left: 14px;
  background: #fff;
}

.dialog-icon {
  width: 19px;
  height: 20px;
}

h2 {
  flex: 1;
  margin: 0 0 0 7px;
  font: 400 17px/24px "Open Sans", sans-serif;
}

h2 span {
  margin-left: 14px;
}

.dialog-body {
  padding: 9px 11px 11px 9px;
}

.dialog-body .tabs {
  padding-left: 1px;
}

.dialog-pane {
  display: flex;
  flex-direction: column;
  min-height: 590px;
  padding: 12px 32px 12px 12px;
  border: 1px solid #dcdcdc;
  background: #fff;
}

.row {
  display: flex;
  gap: 9px;
}

.clamp-row {
  gap: 11px;
  min-height: 76px;
  margin-bottom: 12px;
}

.move-row {
  min-height: 79px;
  margin-bottom: 11px;
}

.angle-row {
  min-height: 136px;
  margin-bottom: 4px;
}

.origin-row {
  min-height: 143px;
}

fieldset {
  min-width: 0;
  margin: 0;
  padding: 0;
  border: 1px solid #dcdcdc;
}

legend {
  margin-left: 6px;
  padding: 0 2px;
  line-height: 20px;
}

.clamp {
  width: 311px;
}

.side {
  width: 212px;
}

.fill {
  flex: 1;
}

.check {
  display: flex;
  align-items: center;
  gap: 4px;
  padding: 17px 0 0 13px;
}

.check input {
  display: flex;
  justify-content: center;
  appearance: none;
  width: 20px;
  height: 20px;
  border: 1px solid #333;
  background: #fff;
}

.check input:checked::before {
  content: "";
  width: 7px;
  height: 13px;
  border: solid #222;
  border-width: 0 2px 2px 0;
  transform: rotate(42deg);
}

.select-wrap {
  position: relative;
  margin: 15px 20px 0 14px;
}

.select-wrap select {
  appearance: none;
  width: 100%;
  height: 28px;
  padding-left: 4px;
  border: 1px solid #adadad;
  background: #e1e1e1;
}

.select-wrap svg {
  position: absolute;
  right: 8px;
  top: 10px;
  width: 12px;
  height: 8px;
  pointer-events: none;
}

.push {
  flex: 1;
  height: 33px;
  border: 1px solid #adadad;
  background: #e1e1e1;
}

.wide {
  display: block;
  width: 178px;
  margin: 7px 0 0 14px;
}

.focused {
  border: 2px solid #0078d7;
}

.align-buttons {
  display: flex;
  gap: 8px;
  padding: 7px 14px 0 18px;
}

.fields {
  display: flex;
  flex-direction: column;
  gap: 7px;
  padding: 2px 17px 0 13px;
}

.fields.spaced {
  gap: 10px;
}

.fields label {
  display: flex;
  align-items: center;
}

.fields span {
  width: 36px;
  padding-top: 6px;
}

.fields input,
.step {
  height: 30px;
  padding: 0 3px 4px;
  border: 1px solid #7a7a7a;
  background: #fff;
}

.fields input {
  flex: 1;
  min-width: 0;
}

.rotate {
  display: flex;
  padding: 7px 0 0 10px;
}

.faces {
  display: grid;
  grid-template-columns: repeat(3, 34px);
  gap: 15px 10px;
}

.face {
  display: flex;
  align-items: center;
  justify-content: center;
  height: 38px;
  border: 1px solid #adadad;
  background: #e1e1e1;
}

.face svg {
  width: 16px;
  height: 16px;
}

.axes {
  display: flex;
  gap: 11px;
  margin-left: 47px;
}

.axis-spin {
  display: flex;
  flex-direction: column;
  width: 25px;
}

.axis-spin span {
  margin-bottom: 15px;
  text-align: center;
}

.axis-spin button,
.step-spin button {
  display: flex;
  align-items: center;
  justify-content: center;
  border: 1px solid #adadad;
  background: linear-gradient(#f2f2f2, #e6e6e6);
}

.axis-spin button {
  height: 28px;
}

.up,
.down {
  border: 5px solid transparent;
}

.up {
  border-top: 0;
  border-bottom-color: #000;
}

.down {
  border-bottom: 0;
  border-top-color: #000;
}

.step {
  width: 86px;
  margin: 49px 9px 0 24px;
}

.step-spin {
  display: flex;
  flex-direction: column;
  width: 25px;
  margin-top: 48px;
}

.step-spin button {
  height: 14px;
}

table {
  width: 368px;
  margin: 0 0 0 17px;
  border-collapse: collapse;
  table-layout: fixed;
}

.col-name {
  width: 80px;
}

.col-x {
  width: 95px;
}

.col-y {
  width: 92px;
}

th,
td {
  height: 40px;
  padding: 0;
  font-weight: 400;
  text-align: right;
}

th {
  text-align: left;
}

/* Visibility dock */
.dock {
  display: flex;
  flex-direction: column;
  width: 113px;
  margin: 1px 1px 0 5px;
}

.dock .dock-title span {
  overflow: hidden;
  white-space: nowrap;
}

.dock .dock-title svg {
  width: 13px;
}

.dock-stack {
  display: flex;
  flex-direction: column;
  flex: 1;
  gap: 5px;
  margin-top: 4px;
  border: 1px solid #0d3f66;
  background: #0d3f66;
  font: 17px/24px "Open Sans", sans-serif;
}

.panel {
  display: flex;
  flex-direction: column;
  flex: 1 1 427px;
  min-height: 0;
  overflow: hidden;
  border-radius: 4px;
}

.panel-main {
  display: flex;
  flex: 1;
  min-height: 0;
}

.panel-tree {
  flex: 1;
  min-width: 0;
  overflow: hidden;
  background: linear-gradient(115deg, #fff, #ccc);
}

h3 {
  margin: 0;
  padding-left: 8px;
  background: linear-gradient(#f4f4f4, #999);
  font: 400 17px/40px "Open Sans", sans-serif;
}

.node {
  display: flex;
  align-items: center;
  height: 24px;
  white-space: nowrap;
}

.node svg,
.mini svg {
  flex: none;
}

.guide-root {
  width: 30px;
  height: 24px;
}

.guide {
  width: 60px;
  height: 24px;
}

.bulb,
.mini-icon {
  width: 24px;
  height: 24px;
  margin-right: 8px;
}

.current {
  outline: 1px solid #7a5a28;
  outline-offset: -1px;
}

.bold {
  font-weight: 700;
}

.swatch {
  width: 14px;
  height: 16px;
  margin-left: -3px;
}

.search-head {
  display: flex;
  height: 30px;
  padding-bottom: 2px;
  background: #0d3f66;
}

.search-head button {
  display: flex;
  align-items: center;
  justify-content: center;
  flex: 1;
  border: 1px solid #888;
  border-width: 0 1px 0 0;
  background: linear-gradient(#f4f4f4, #a8a8a8);
}

.search-head button:first-child {
  flex: none;
  width: 81px;
  padding-right: 8px;
}

.search-head svg,
.scrollbar svg,
.mini button svg {
  width: 12px;
  height: 8px;
}

.scrollbar {
  display: flex;
  flex-direction: column;
  width: 21px;
  border-left: 1px solid #888;
  background: #fff;
}

.scrollbar button {
  display: flex;
  align-items: center;
  justify-content: center;
  height: 22px;
  border-bottom: 1px solid #888;
  background: linear-gradient(#fff, #ddd);
}

.thumb {
  display: flex;
  flex-direction: column;
  align-items: center;
  justify-content: center;
  gap: 4px;
  flex: 243;
  border-bottom: 1px solid #888;
  background: linear-gradient(#fdfdfd, #ccc);
}

.thumb i {
  width: 14px;
  height: 1px;
  background: #aaa;
}

.track {
  flex: 139;
}

.mini {
  display: flex;
  align-items: center;
  height: 25px;
  overflow: hidden;
  border-radius: 3px;
  background: linear-gradient(#fafafa, #c4c4c4);
}

.mini button {
  display: flex;
  align-items: center;
  justify-content: center;
  width: 20px;
  height: 25px;
  margin-left: auto;
  border-left: 1px solid #888;
}
</style>
